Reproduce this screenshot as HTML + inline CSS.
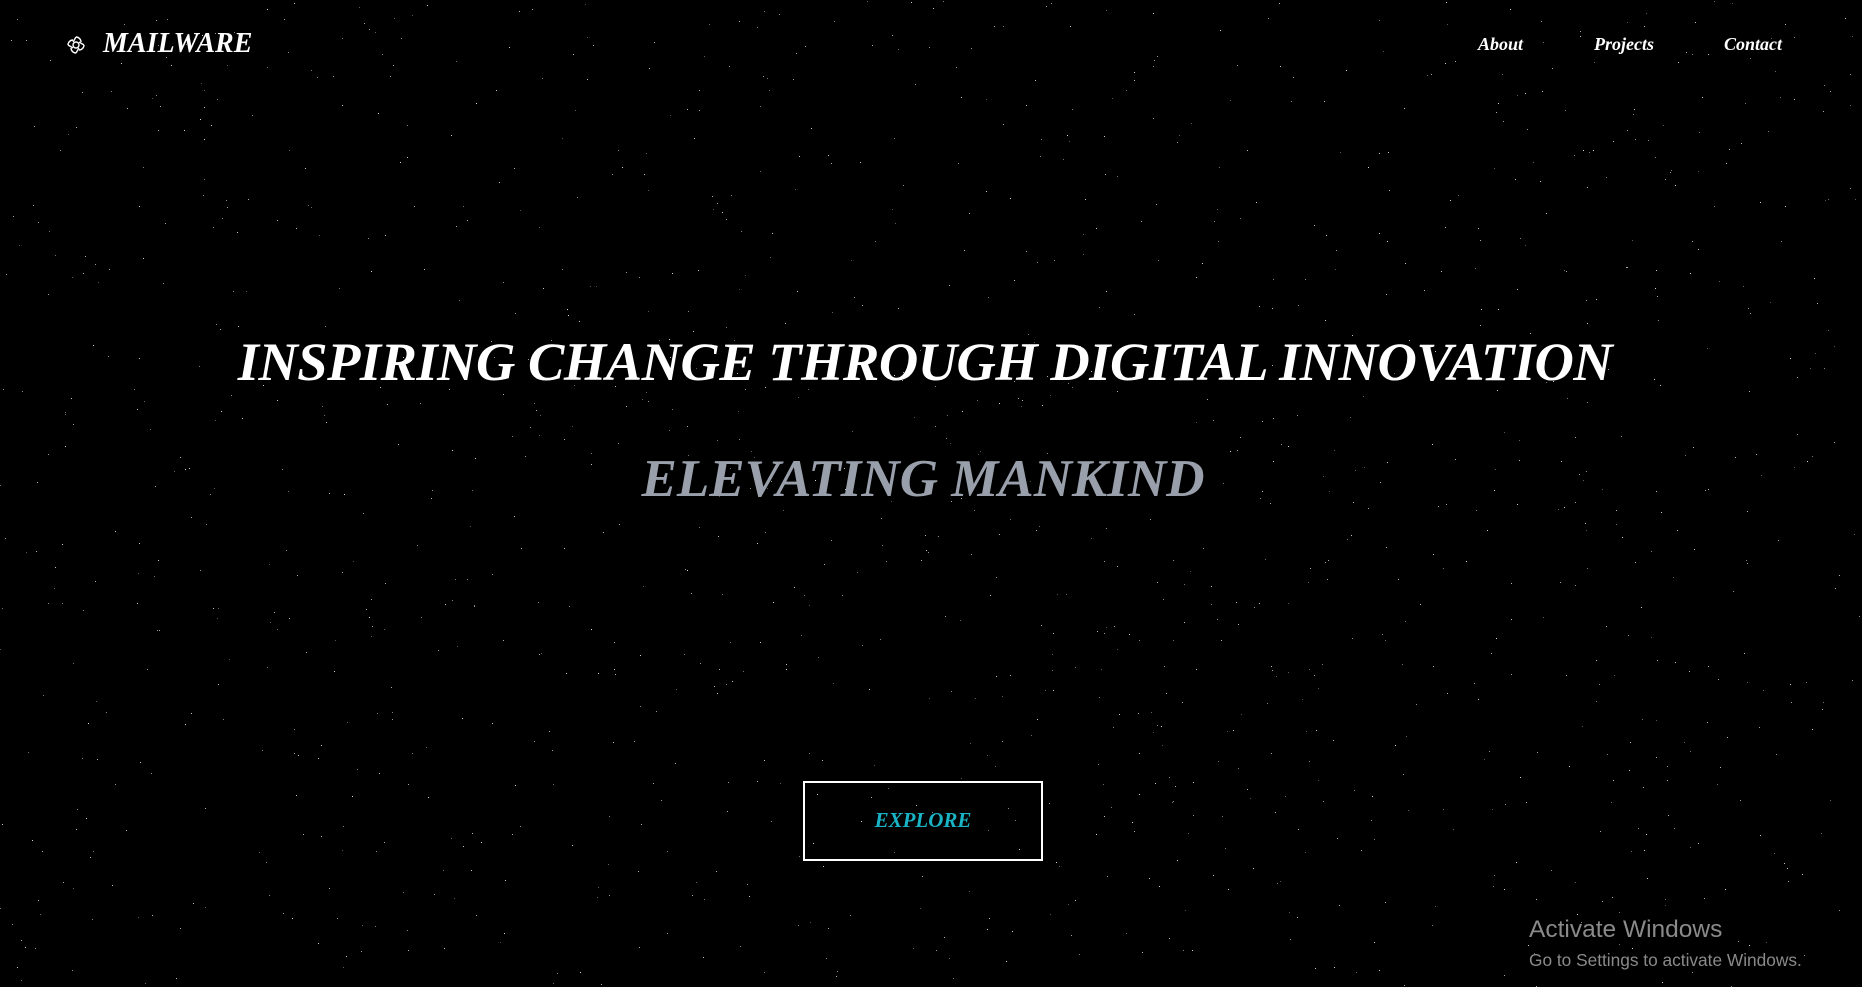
<!DOCTYPE html>
<html><head><meta charset="utf-8"><style>
html,body{margin:0;width:1862px;height:987px;background:#000;overflow:hidden;position:relative;font-family:"Liberation Serif",serif}
#stars{position:absolute;left:0;top:0;width:1px;height:1px;background:transparent}
.s{position:absolute;font-style:italic;font-weight:bold;color:#fff;white-space:nowrap}
.nav{font-size:18px;top:34px}
</style></head><body>
<div id="stars"></div>
<svg style="position:absolute;left:66px;top:35px" width="20" height="20" viewBox="0 0 20 20" fill="none" stroke="#fff" stroke-width="1.4"><circle cx="10" cy="10" r="3"/><path d="M10 2a5 5 0 0 1 5 5M18 10a5 5 0 0 1-5 5M10 18a5 5 0 0 1-5-5M2 10a5 5 0 0 1 5-5M10 2 7 7M18 10l-5-3M10 18l3-5M2 10l5 3"/></svg>
<div class="s" style="left:103px;top:28px;font-size:28px">MAILWARE</div>
<div class="s nav" style="left:1478px">About</div>
<div class="s nav" style="left:1594px">Projects</div>
<div class="s nav" style="left:1724px">Contact</div>
<div class="s" style="left:0;width:1850px;text-align:center;top:330px;font-size:54.5px;letter-spacing:-0.5px">INSPIRING CHANGE THROUGH DIGITAL INNOVATION</div>
<div class="s" style="left:0;width:1846px;text-align:center;top:449px;font-size:53px;color:#9aa0ab">ELEVATING MANKIND</div>
<div style="position:absolute;left:803px;top:781px;width:236px;height:76px;border:2px solid #fff"></div>
<div class="s" style="left:803px;width:240px;text-align:center;top:808px;font-size:21px;color:#1ab3c6">EXPLORE</div>
<div style="position:absolute;left:1529px;top:916px;font-family:'Liberation Sans',sans-serif;color:#8a8a8a;font-size:24.5px">Activate Windows</div>
<div style="position:absolute;left:1529px;top:950px;font-family:'Liberation Sans',sans-serif;color:#8a8a8a;font-size:17.3px">Go to Settings to activate Windows.</div>
<script>
var seed=7;function r(){seed=(seed*16807)%2147483647;return seed/2147483647;}
var a=[];for(var i=0;i<1300;i++){var x=Math.floor(r()*1862),y=Math.floor(r()*987),c=Math.floor(80+r()*140);a.push(x+'px '+y+'px 0 0 rgb('+c+','+c+','+c+')');}
document.getElementById('stars').style.boxShadow=a.join(',');
</script>
</body></html>
